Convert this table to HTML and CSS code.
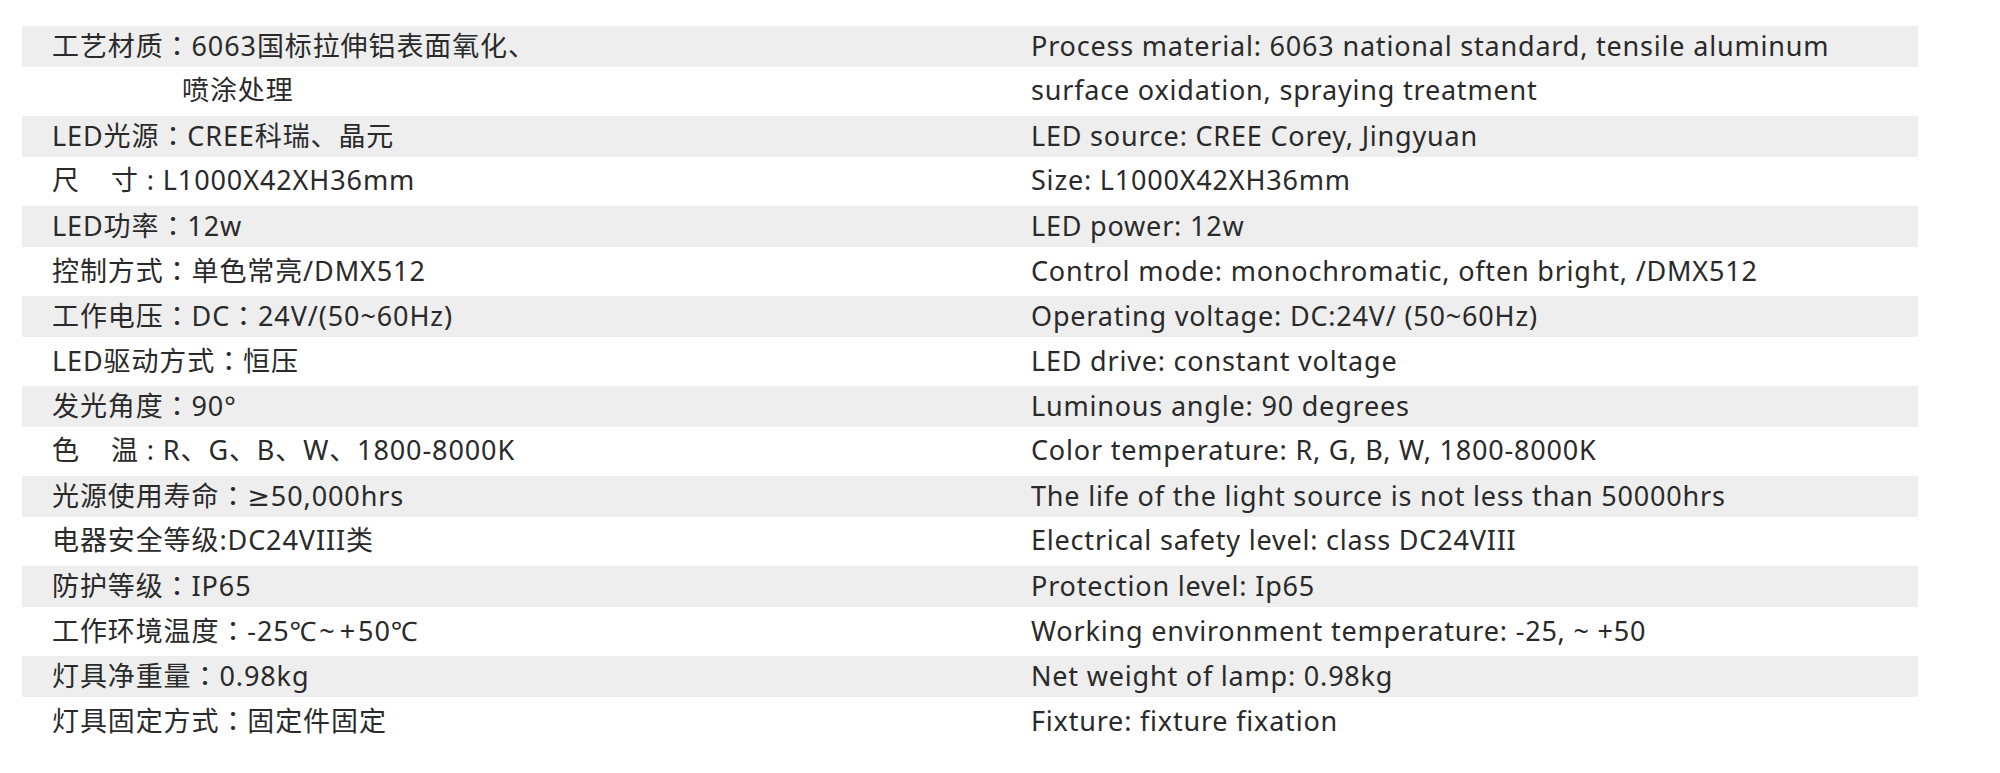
FILE: index.html
```html
<!DOCTYPE html>
<html lang="zh-CN">
<head>
<meta charset="utf-8">
<title>Specs</title>
<link rel="stylesheet" href="styles.css">
</head>
<body>
<div class="spec">
  <div class="row gray"><div class="zh">工艺材质<span class="c" lang="ja">：</span>6063国标拉伸铝表面氧化、</div><div class="en">Process material: 6063 national standard, tensile aluminum</div></div>
  <div class="row"><div class="zh indent">喷涂处理</div><div class="en">surface oxidation, spraying treatment</div></div>
  <div class="row gray"><div class="zh">LED光源<span class="c" lang="ja">：</span>CREE科瑞、晶元</div><div class="en">LED source: CREE Corey, Jingyuan</div></div>
  <div class="row"><div class="zh">尺<span class="gap"></span>寸 : L1000X42XH36mm</div><div class="en">Size: L1000X42XH36mm</div></div>
  <div class="row gray"><div class="zh">LED功率<span class="c" lang="ja">：</span>12w</div><div class="en">LED power: 12w</div></div>
  <div class="row"><div class="zh">控制方式<span class="c" lang="ja">：</span>单色常亮/DMX512</div><div class="en">Control mode: monochromatic, often bright, /DMX512</div></div>
  <div class="row gray"><div class="zh">工作电压<span class="c" lang="ja">：</span>DC<span class="c" lang="ja">：</span>24V/(50~60Hz)</div><div class="en">Operating voltage: DC:24V/ (50~60Hz)</div></div>
  <div class="row"><div class="zh">LED驱动方式<span class="c" lang="ja">：</span>恒压</div><div class="en">LED drive: constant voltage</div></div>
  <div class="row gray"><div class="zh">发光角度<span class="c" lang="ja">：</span>90°</div><div class="en">Luminous angle: 90 degrees</div></div>
  <div class="row"><div class="zh">色<span class="gap"></span>温 : R、G、B、W、1800-8000K</div><div class="en">Color temperature: R, G, B, W, 1800-8000K</div></div>
  <div class="row gray"><div class="zh">光源使用寿命<span class="c" lang="ja">：</span><span class="sym">≥</span>50,000hrs</div><div class="en">The life of the light source is not less than 50000hrs</div></div>
  <div class="row"><div class="zh">电器安全等级:DC24VIII类</div><div class="en">Electrical safety level: class DC24VIII</div></div>
  <div class="row gray"><div class="zh">防护等级<span class="c" lang="ja">：</span>IP65</div><div class="en">Protection level: Ip65</div></div>
  <div class="row"><div class="zh">工作环境温度<span class="c" lang="ja">：</span>-25℃<span class="op">~</span><span class="op">+</span>50℃</div><div class="en">Working environment temperature: -25, ~ +50</div></div>
  <div class="row gray"><div class="zh">灯具净重量<span class="c" lang="ja">：</span>0.98kg</div><div class="en">Net weight of lamp: 0.98kg</div></div>
  <div class="row"><div class="zh">灯具固定方式<span class="c" lang="ja">：</span>固定件固定</div><div class="en">Fixture: fixture fixation</div></div>
</div>
</body>
</html>
```

FILE: styles.css
```css
html, body {
  margin: 0;
  padding: 0;
  background: #ffffff;
}
body {
  font-family: "Noto Sans", "Noto Sans CJK SC", sans-serif;
  color: #2a2a2a;
}
.spec {
  display: flex;
  flex-direction: column;
  gap: 4px;
  margin: 26px 0 0 22px;
  width: 1896px;
}
.row {
  box-sizing: border-box;
  display: grid;
  grid-template-columns: 979px 1fr;
  align-items: center;
  height: 41px;
  padding-left: 30px;
  padding-bottom: 3px;
  font-size: 27px;
  line-height: 38px;
  white-space: nowrap;
}
.row.gray {
  background: #eeeeee;
}
.zh {
  font-family: "Noto Sans", "Noto Sans CJK SC", sans-serif;
  letter-spacing: 0.9px;
}
.c {
  font-family: "Noto Sans CJK JP", sans-serif;
}
.sym {
  font-family: "DejaVu Sans", sans-serif;
}
.op {
  padding: 0 2px;
}
.indent {
  padding-left: 130px;
}
.gap {
  display: inline-block;
  width: 31px;
}
.en {
  font-family: "Noto Sans", sans-serif;
  letter-spacing: 0.8px;
}
```
